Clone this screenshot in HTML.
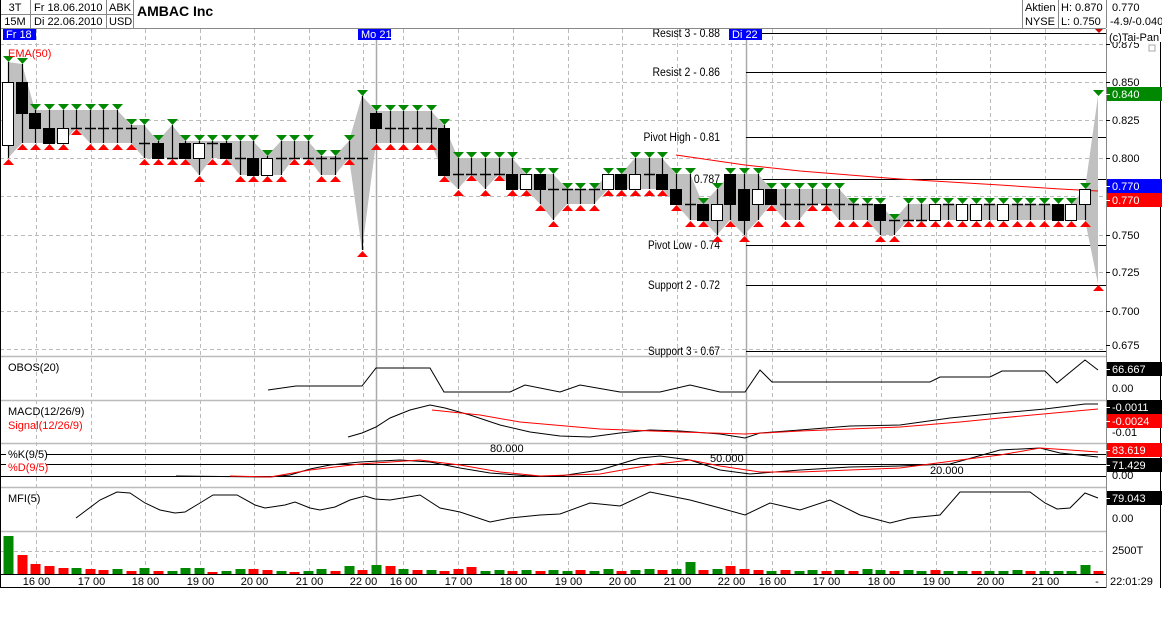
<!DOCTYPE html>
<html><head><meta charset="utf-8"><style>
body{margin:0;background:#fff;width:1162px;height:624px;overflow:hidden;font-family:"Liberation Sans",sans-serif}
svg{display:block}
text{font-family:"Liberation Sans",sans-serif;font-size:11px}
</style></head><body>
<svg id="s" width="1162" height="624" xmlns="http://www.w3.org/2000/svg"></svg>
<script>
const S=document.getElementById('s');let h='';
function L(x1,y1,x2,y2,c,w,d){h+=`<line x1="${x1}" y1="${y1}" x2="${x2}" y2="${y2}" stroke="${c}" stroke-width="${w||1}" ${d?'stroke-dasharray="'+d+'"':''}/>`}
function R(x,y,w,hh,f,s){h+=`<rect x="${x}" y="${y}" width="${w}" height="${hh}" fill="${f}" ${s?'stroke="'+s+'"':''}/>`}
function T(x,y,t,c,a,sz,wt){h+=`<text x="${x}" y="${y}" fill="${c||'#000'}" ${a?'text-anchor="'+a+'"':''} style="font-size:${sz||11}px;${wt?'font-weight:bold':''}">${t}</text>`}
function P(pts,c,w){h+=`<polyline points="${pts.map(p=>p.join(',')).join(' ')}" fill="none" stroke="${c}" stroke-width="${w||1}"/>`}
const hx=[36,91,145,200,254,309,363,403,458,513,568,622,677,731,772,826,881,936,990,1045];
hx.forEach(x=>L(x+.5,29,x+.5,574,'#bbb',1,'4,3'));
[44,82,120,158,196,235,272,311,349].forEach(y=>L(0,y+.5,1106,y+.5,'#bbb',1,'4,3'));
L(0,551.5,1106,551.5,'#bbb',1,'4,3');
[376,746].forEach(x=>L(x+.5,29,x+.5,574,'#aaa',1.5));
[356,400,443,487,531].forEach(y=>L(0,y+.5,1106,y+.5,'#bbb',1.5));
[[33,'Resist 3 - 0.88'],[72,'Resist 2 - 0.86'],[137,'Pivot High - 0.81'],[179,'Pivot - 0.787'],[245,'Pivot Low - 0.74'],[285,'Support 2 - 0.72'],[351,'Support 3 - 0.67']].forEach(p=>{L(746,p[0]+.5,1106,p[0]+.5,'#000',1);h+=`<text x="720" y="${p[0]+4}" text-anchor="end" textLength="${p[1].length*4.5}" lengthAdjust="spacingAndGlyphs" style="font-size:11.5px">${p[1]}</text>`});
const D=[[62,158,82,145,'w'],[64,143,82,113,'b'],[110,143,113,128,'b'],[110,143,128,143,'b'],[110,143,128,143,'w'],[110,128,128,128,'d'],[110,143,128,128,'d'],[110,143,128,128,'d'],[110,143,128,128,'d'],[125,143,128,128,'d'],[125,158,143,143,'d'],[141,158,143,158,'b'],[125,158,158,158,'d'],[141,158,143,158,'b'],[141,175,143,158,'w'],[141,158,143,143,'d'],[141,158,143,158,'b'],[141,175,158,158,'d'],[141,175,158,175,'b'],[156,175,158,175,'w'],[141,175,158,158,'d'],[141,158,158,158,'d'],[141,158,158,158,'d'],[156,175,158,158,'d'],[156,175,158,158,'d'],[141,158,158,158,'d'],[96,250,158,158,'d'],
[111,143,113,128,'b'],[111,143,128,128,'d'],[111,143,128,128,'d'],[111,143,128,128,'d'],[111,143,128,128,'d'],[125,175,128,175,'b'],[158,189,174,174,'d'],[158,174,174,174,'d'],[158,189,174,174,'d'],[158,174,174,174,'d'],[158,189,174,189,'b'],[174,189,174,189,'w'],[174,204,174,189,'b'],[174,220,189,189,'d'],[189,204,189,189,'d'],[189,204,189,189,'d'],[189,204,189,189,'d'],[174,189,174,189,'w'],[174,189,174,189,'b'],[158,189,174,189,'w'],[158,189,174,174,'d'],[158,189,174,189,'b'],[174,204,189,204,'b'],[174,220,204,204,'d'],[204,220,204,220,'b'],[189,235,204,220,'w'],[174,220,174,204,'b'],
[174,235,189,220,'b'],[174,220,189,204,'w'],[189,204,189,204,'b'],[189,220,204,204,'d'],[189,220,204,204,'d'],[189,204,204,204,'d'],[189,204,204,204,'d'],[189,220,204,204,'d'],[204,220,204,204,'d'],[204,220,204,204,'d'],[204,235,204,220,'b'],[220,235,220,220,'d'],[204,220,220,220,'d'],[204,220,220,220,'d'],[204,220,204,220,'w'],[204,220,204,204,'d'],[204,220,204,220,'w'],[204,220,204,220,'w'],[204,220,204,204,'d'],[204,220,204,220,'w'],[204,220,204,204,'d'],[204,220,204,204,'d'],[204,220,204,204,'d'],[204,220,204,220,'b'],[204,220,204,220,'w'],[189,220,189,204,'w'],[96,284,0,0,'n']];
const X=i=>Math.round(8+i*13.63);
let up=D.map((d,i)=>[X(i),d[0]]),dn=D.map((d,i)=>[X(i),d[1]]).reverse();
h+=`<polygon points="${up.concat(dn).map(p=>p.join(',')).join(' ')}" fill="#c0c0c0"/>`;
P([[676,155],[745,165],[800,171],[900,179],[1000,185],[1060,189],[1098,191]],'#f00',1);
D.forEach((d,i)=>{const x=X(i);
 if(d[4]!='n'){L(x+.5,d[0],x+.5,d[1],'#000',1.2);
 if(d[4]=='d')L(x-5,d[2]+.5,x+6,d[2]+.5,'#000',1.5);
 else R(x-5.5,d[2]+.5,11,Math.max(d[3]-d[2],2),d[4]=='w'?'#fff':'#000','#000');}
 h+=`<polygon points="${x-5},${d[0]-6} ${x+6},${d[0]-6} ${x+.5},${d[0]}" fill="#080"/>`;
 h+=`<polygon points="${x-5},${d[1]+7} ${x+6},${d[1]+7} ${x+.5},${d[1]+1}" fill="#f00"/>`;
});
const V=[[536,'g'],[555,'r'],[564,'r'],[566,'r'],[568,'r'],[568,'g'],[569,'r'],[570,'r'],[569,'g'],[571,'r'],[568,'g'],[571,'r'],[571,'g'],[568,'g'],[568,'g'],[572,'r'],[571,'g'],[569,'g'],[569,'r'],[570,'r'],[571,'g'],[572,'r'],[571,'g'],[569,'g'],[571,'r'],[566,'g'],[570,'r'],[565,'g'],[566,'r'],[569,'g'],[570,'r'],[570,'g'],[571,'r'],[569,'r'],[567,'r'],[571,'g'],[570,'g'],[571,'r'],[570,'g'],[571,'r'],[570,'g'],[571,'g'],[570,'r'],[571,'g'],[569,'g'],[571,'r'],[570,'g'],[569,'g'],[570,'r'],[569,'g'],[562,'g'],[570,'r'],[569,'g'],[566,'r'],[569,'r'],[570,'r'],[571,'g'],[570,'r'],[571,'g'],[570,'g'],[571,'r'],[570,'g'],[571,'r'],[569,'g'],[570,'g'],[571,'r'],[570,'g'],[571,'g'],[570,'r'],[571,'g'],[571,'g'],[571,'r'],[571,'g'],[571,'g'],[570,'g'],[571,'r'],[571,'g'],[571,'g'],[571,'g'],[565,'g'],[571,'r']];
V.forEach((v,i)=>R(X(i)-4.5,v[0],10,574-v[0],v[1]=='g'?'#080':'#f00'));
P([[268,390],[296,386],[362,386],[376,368],[430,368],[444,392],[510,392],[525,385],[560,392],[580,385],[620,392],[660,392],[690,385],[720,392],[745,392],[760,370],[772,382],[930,382],[940,377],[990,377],[1002,371],[1045,371],[1057,383],[1085,360],[1098,370]],'#000');
P([[348,437],[362,433],[376,427],[390,418],[410,410],[430,405],[445,408],[470,415],[500,425],[530,432],[560,436],[590,437],[620,433],[650,430],[680,431],[720,434],[745,438],[760,433],[800,430],[850,426],[900,425],[950,418],[1000,413],[1045,409],[1085,404],[1098,404]],'#000');
P([[432,410],[480,415],[520,422],[600,429],[680,432],[745,434],[800,431],[900,427],[960,422],[1000,418],[1098,409]],'#f00');
[454,464,476].forEach(y=>L(0,y+.5,1106,y+.5,'#000',1));
T(490,452,'80.000');T(710,462,'50.000');T(930,474,'20.000');
P([[176,476],[270,477],[290,475],[310,469],[330,465],[360,462],[400,460],[430,462],[460,468],[490,473],[530,476],[560,476],[600,470],[640,458],[660,456],[690,460],[720,470],[750,474],[800,470],[850,467],[900,466],[950,464],[1000,450],[1040,448],[1060,453],[1098,457]],'#000');
P([[230,476],[270,477],[310,470],[360,464],[420,460],[460,465],[500,472],[540,476],[600,474],[650,465],[690,460],[720,466],[760,472],[800,472],[900,468],[960,460],[1000,455],[1040,448],[1070,450],[1098,452]],'#f00');
P([[76,518],[100,500],[117,492],[130,493],[145,503],[160,510],[175,513],[185,512],[200,503],[213,495],[237,495],[255,505],[265,508],[285,505],[295,502],[310,508],[320,510],[335,507],[350,500],[365,496],[375,499],[390,500],[420,495],[440,508],[460,512],[490,522],[510,518],[540,515],[560,514],[590,503],[620,506],[650,492],[690,500],[720,508],[745,515],[770,503],[800,510],[830,500],[860,515],[890,523],[910,518],[940,515],[960,492],[1030,492],[1045,503],[1057,509],[1070,508],[1085,493],[1098,498]],'#000');
T(8,57,'EMA(50)','#f00');T(8,371,'OBOS(20)');T(8,415,'MACD(12/26/9)');T(8,429,'Signal(12/26/9)','#f00');
R(6,452,40,6,'#fff');T(8,458,'%K(9/5)');R(6,463,40,8,'#fff');T(8,471,'%D(9/5)','#f00');T(8,502,'MFI(5)');
L(0,574.5,1106,574.5,'#000');L(0,587.5,1162,587.5,'#000');
const tl=['16','17','18','19','20','21','22','16','17','18','19','20','21','22','16','17','18','19','20','21'];
hx.forEach((x,i)=>{T(x-1,585,tl[i],'#000','end');T(x+2,585,'00');});
T(1097,585,'-','#000','middle');
R(1106,29,56,560,'#fff');L(1106.5,29,1106.5,588,'#888');L(1160.5,0,1160.5,588,'#000');
[[44,'0.875'],[82,'0.850'],[120,'0.825'],[158,'0.800'],[235,'0.750'],[272,'0.725'],[311,'0.700'],[345,'0.675']].forEach(p=>{L(1106,p[0]+.5,1110,p[0]+.5,'#000');T(1112,p[0]+4,p[1])});
function B(y,t,bg){R(1107,y,55,14,bg);T(1112,y+11,t,'#fff');L(1106,y+7.5,1110,y+7.5,'#fff')}
B(87,'0.840','#080');B(179,'0.770','#00f');B(193,'0.770','#f00');
T(1112,392,'0.00');T(1112,436,'-0.01');T(1112,479,'0.00');T(1112,522,'0.00');
T(1112,554,'2500T');
B(362,'66.667','#000');B(400,'-0.0011','#000');B(414,'-0.0024','#f00');B(443,'83.619','#f00');B(458,'71.429','#000');B(491,'79.043','#000');
R(1108,34,54,8,'#fff');T(1109,41,'(c)Tai-Pan');R(1149,45,6,6,'#fff','#aaa');
T(1110,585,'22:01:29');
h+=`<polygon points="1095,29 1103,29 1099,33" fill="#c00"/>`;
[[3,'Fr 18'],[358,'Mo 21'],[729,'Di 22']].forEach(d=>{R(d[0],29,33,11,'#00f');T(d[0]+3,38,d[1],'#fff')});
R(0,0,1162,28,'#fff');L(0,28.5,1106,28.5,'#888');L(0,14.5,133,14.5,'#888');
[30,106,133].forEach(x=>L(x+.5,0,x+.5,28,'#888'));[1022,1058,1106].forEach(x=>L(x+.5,0,x+.5,28,'#888'));
L(0.5,0,0.5,588,'#000');
T(15,11,'3T','#000','middle');T(15,25,'15M','#000','middle');T(34,11,'Fr 18.06.2010');T(34,25,'Di 22.06.2010');
T(109,11,'ABK');T(109,25,'USD');T(137,16,'AMBAC Inc','#000',0,14,1);
T(1025,11,'Aktien');T(1025,25,'NYSE');T(1061,11,'H: 0.870');T(1061,25,'L: 0.750');T(1112,11,'0.770');T(1110,25,'-4.9/-0.040');
S.innerHTML=h;
</script>
</body></html>
